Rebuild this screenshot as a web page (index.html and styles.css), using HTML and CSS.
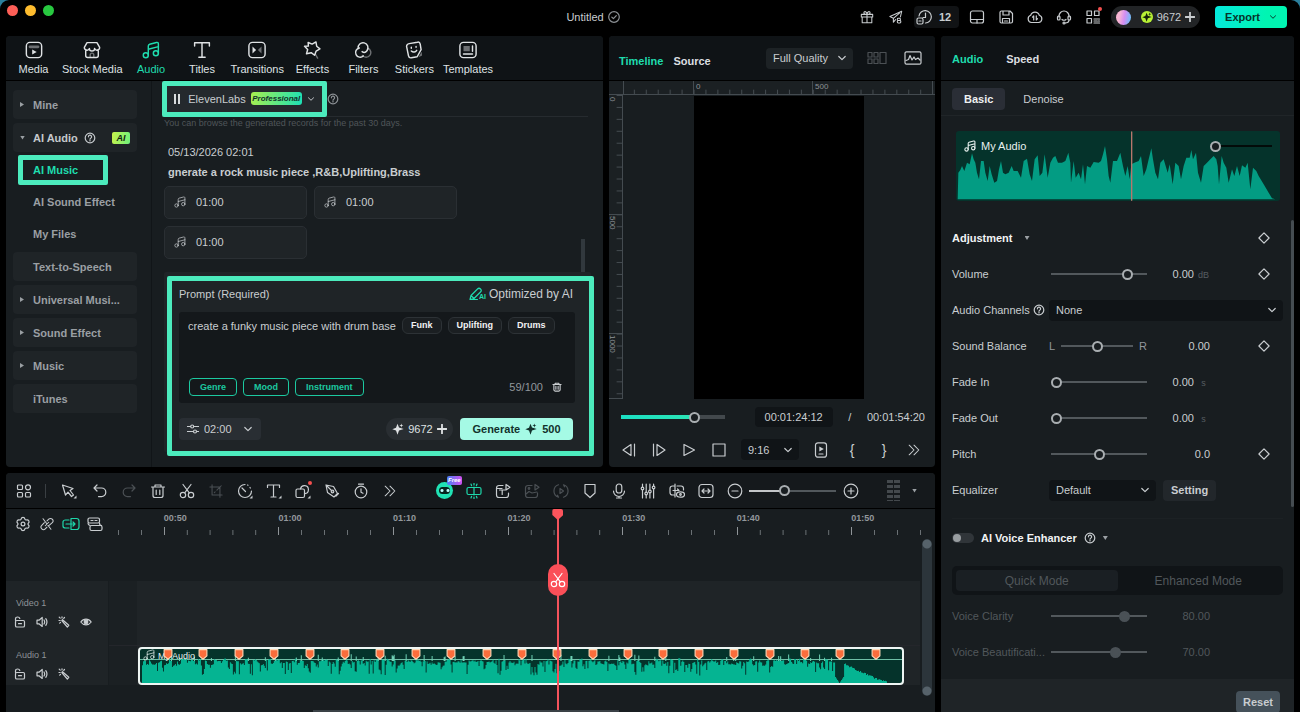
FILE: index.html
```html
<!DOCTYPE html>
<html lang="en">
<head>
    <meta charset="UTF-8">
    <meta name="viewport" content="width=device-width, initial-scale=1.0">
    <title>Untitled</title>
    <link rel="stylesheet" href="styles.css">
</head>
<body>

<!-- icon sprite -->
<svg class="sprite" aria-hidden="true">
    <symbol id="chevron" viewBox="0 0 10 10"><path d="M1.8 3.5L5 6.600l3.200-3.100"/></symbol>
    <symbol id="help" viewBox="0 0 12 12"><circle cx="6" cy="6" r="4.800"/><path d="M4.400 4.800a1.600 1.600 0 1 1 2.300 1.400c-.5.3-.7.5-.7 1M6 8.300v.7"/></symbol>
    <symbol id="diamond" viewBox="0 0 12 12"><path d="M6 .9L11.100 6 6 11.100.9 6z"/></symbol>
    <symbol id="plus" viewBox="0 0 10 10"><path d="M5 .5v9M.5 5h9"/></symbol>
    <symbol id="spark" viewBox="0 0 12 12"><path fill="currentColor" stroke="none" d="M5.500.8L7 4.600 11.700 6 7 7.400 5.500 11.700 4 7.600.3 6.200 4 4.800zM9.300.5l.5 1.600 1.600.5-1.600.5-.5 1.600-.5-1.600-1.500-.5 1.500-.5z"/></symbol>
    <symbol id="music" viewBox="0 0 20 20"><circle cx="4.200" cy="15.800" r="2.800"/><circle cx="15.400" cy="13.600" r="2.800"/><path d="M7 15.800V5.600c0-1 .6-1.700 1.500-2l7.600-2c1.200-.3 2.100.4 2.100 1.600v10.400M7 9.200l11.200-2.900"/></symbol>
    <symbol id="media" viewBox="0 0 20 20"><rect x="1.500" y="1.500" width="17" height="17" rx="4"/><path class="dim" d="M5.500 6.500h9" stroke-width="3"/><path fill="currentColor" stroke="none" d="M8 9.500l5 2.800-5 2.800z"/></symbol>
    <symbol id="store" viewBox="0 0 20 20"><path d="M4.500 1.800h11l3 5.300a2.900 2.900 0 0 1-5.600 1.200 2.900 2.900 0 0 1-5.800 0A2.900 2.900 0 0 1 1.500 7.100zM3 10.500v5.700c0 1.300.9 2.200 2.200 2.200h9.600c1.300 0 2.200-.9 2.200-2.200v-5.700"/><path class="dim" d="M8 18v-2.500a2 2 0 0 1 4 0V18"/></symbol>
    <symbol id="titles" viewBox="0 0 20 20"><path d="M1.800 5.500V2h16.400v3.500M10 2v16M6.500 18h7"/></symbol>
    <symbol id="transitions" viewBox="0 0 20 20"><rect x="1" y="1.500" width="18" height="17" rx="4"/><path fill="currentColor" stroke="none" d="M5 6.200l4 3.800-4 3.800z"/><path class="dim" fill="currentColor" stroke="none" d="M15 6.200L11 10l4 3.800z"/></symbol>
    <symbol id="effects" viewBox="0 0 20 20"><path d="M5.700 1.700l4.500 1.800L14.400 1l.8 4.800 3.600 2.900-4.200 2.500-1.700 4.600-3.800-2.800-5.200 1.200 1.300-4.800L1.700 5.900l4.300-.2z"/><path class="dim" d="M14 15l2.200 4"/></symbol>
    <symbol id="filters" viewBox="0 0 20 20"><path d="M4.600 8.300a5.500 5.500 0 1 1 9.800 2.500c-1.300 1.700-3.700 2.200-5.400 1"/><path d="M6 7.700a5.200 5.200 0 1 0 4.400 9"/><path class="dim" d="M15.300 8a5.200 5.200 0 1 1-6 8"/></symbol>
    <symbol id="stickers" viewBox="0 0 20 20"><path d="M4.600 2.900l9.200-1.600c1.500-.3 2.800.6 3.100 2.100l1 6.100-4.400 8-6.500 1.200c-1.500.2-2.800-.7-3.100-2.200L1.800 6.200c-.3-1.600 1-3 2.800-3.300z"/><path d="M7 7v1M12.300 6v1M7 11.200c2 1.800 4.600 1.300 6-.9"/><path class="dim" fill="currentColor" stroke="none" d="M18.500 12l-3.500 6 4-2z"/></symbol>
    <symbol id="templates" viewBox="0 0 20 20"><rect x="1" y="1.500" width="18" height="17" rx="4"/><path class="dim" fill="currentColor" stroke="none" d="M5 5.500h7v6H5z"/><path d="M15 5.500v6M5 14.500h10"/></symbol>
    <symbol id="check" viewBox="0 0 12 12"><circle cx="6" cy="6" r="5.300"/><path d="M3.800 6.100l1.600 1.600 2.900-3.100"/></symbol>
    <symbol id="gift" viewBox="0 0 16 16"><path d="M1.500 5h13v3h-13zM2.500 8v6.500h11V8M8 5v9.500M8 5C5 5 4 3.800 4.600 2.500S7.600 1.800 8 5c.4-3.200 2.800-3.800 3.400-2.500S11 5 8 5"/></symbol>
    <symbol id="send" viewBox="0 0 16 16"><path d="M1 7.500L14.500 1.500 13 8M1 7.500l4 2 7-6M5 9.500v4.500l2.500-3"/><rect x="9.500" y="9.500" width="3.500" height="2.500" rx="1"/><rect x="9.500" y="12" width="4" height="2.800" rx="1"/></symbol>
    <symbol id="credits" viewBox="0 0 16 16"><path d="M3 7a6.200 6.200 0 1 1 6.500 7M9.500 4v4.500H7"/><rect x="1" y="9" width="6" height="6" rx="1.500"/><path d="M3 12h2"/></symbol>
    <symbol id="layout" viewBox="0 0 16 16"><rect x="1.500" y="2" width="13" height="12" rx="2"/><path d="M1.500 10.500h13M8 10.500V14"/></symbol>
    <symbol id="save" viewBox="0 0 16 16"><path d="M2 3.500C2 2.500 2.500 2 3.500 2H12l2.500 2.500v8c0 1-.5 1.500-1.500 1.500H3.500C2.500 14 2 13.500 2 12.500zM5 2v4h6V2M4.500 14V9.500h7V14M6.500 12h3"/></symbol>
    <symbol id="cloud" viewBox="0 0 16 16"><path d="M4.500 13.500a3.700 3.700 0 0 1-.8-7.200 4.500 4.500 0 0 1 8.600 0 3.700 3.700 0 0 1-.8 7.200zM6.700 11V6.800L5.500 8.200M9.300 6.800V11l1.200-1.400"/></symbol>
    <symbol id="headset" viewBox="0 0 16 16"><path d="M3 8V7a5 5 0 0 1 10 0v1"/><rect x="1.500" y="7" width="2.500" height="4" rx="1"/><rect x="12" y="7" width="2.500" height="4" rx="1"/><path d="M13 11c0 2-1.500 3-4 3M6 10.500c1 1 3 1 4 0"/><circle cx="8" cy="14" r="1"/></symbol>
    <symbol id="apps" viewBox="0 0 16 16"><rect x="2" y="2" width="4.500" height="4.500"/><rect x="9.500" y="2" width="4.500" height="4.500"/><rect x="2" y="9.500" width="4.500" height="4.500"/><path d="M9 10h5.500M9 12h3M13 12h1.500M9 14h5.500"/></symbol>
    <symbol id="pen" viewBox="0 0 14 14"><path d="M1 12.500l1-4L8.500 2c1-1 2-1 3 0s1 2 0 3L5 11.500zM2 8.500l3 3M1 12.500h7.500"/></symbol>
    <symbol id="trash" viewBox="0 0 16 16"><path d="M1.500 4h13M5 4V2h6v2M3 4v8.500c0 1 .8 2 2 2h6c1.200 0 2-1 2-2V4M6.200 7v4.500M9.800 7v4.500"/></symbol>
    <symbol id="sliders" viewBox="0 0 12 12"><path d="M.5 3.500h3M7 3.500h4.500M.5 8.500H6M10 8.500h1.500"/><circle cx="5.200" cy="3.500" r="1.500"/><circle cx="8" cy="8.500" r="1.500"/></symbol>
    <symbol id="compare" viewBox="0 0 20 14"><rect x="1" y="1.500" width="4" height="4.500"/><rect x="1" y="8" width="4" height="4.500"/><rect x="7" y="1.500" width="4" height="4.500"/><rect x="7" y="8" width="4" height="4.500"/><rect x="13" y="1.500" width="6" height="11"/></symbol>
    <symbol id="scope" viewBox="0 0 18 14"><rect x="1" y=".8" width="16" height="12.400" rx="1.500"/><path d="M2 9.500l2.500-1L6 4.500l2 4.500 2-3 1.500 2.500L14 7l2 2"/></symbol>
    <symbol id="prev-frame" viewBox="0 0 16 16"><path d="M10 2.500v11L2 8zM13.500 2v12"/></symbol>
    <symbol id="next-frame" viewBox="0 0 16 16"><path d="M6 2.500v11L14 8zM2.500 2v12"/></symbol>
    <symbol id="play" viewBox="0 0 16 16"><path d="M3 2.500v11L13.500 8z"/></symbol>
    <symbol id="stop" viewBox="0 0 16 16"><path d="M2 2h12v12H2z"/></symbol>
    <symbol id="device" viewBox="0 0 16 16"><rect x="2.500" y=".8" width="11" height="14.400" rx="2.500"/><path fill="currentColor" stroke="none" d="M6.300 4.500l4.500 2.500-4.500 2.500z"/><path d="M6 12h4"/></symbol>
    <symbol id="more" viewBox="0 0 16 16"><path d="M2.500 2.500L8 8l-5.500 5.500M8 2.500L13.500 8 8 13.500"/></symbol>
    <symbol id="grid" viewBox="0 0 16 16"><rect x="1.500" y="2" width="5" height="4.500" rx="1"/><circle cx="12" cy="4.300" r="2.500"/><rect x="1.500" y="9.500" width="5" height="4.500" rx="1"/><rect x="9.500" y="9.500" width="5" height="4.500" rx="1"/></symbol>
    <symbol id="cursor" viewBox="0 0 16 16"><path d="M1.500 2l10.500 3.500-3 2 3.500 4.500-2 1.500L7 9.200 4.500 12z"/><path fill="currentColor" stroke="none" d="M15.500 12.500v3h-3z"/></symbol>
    <symbol id="undo" viewBox="0 0 16 16"><path d="M5 2L2 5l3 3M2 5h7.500a4.300 4.300 0 0 1 0 8.600H6.500"/></symbol>
    <symbol id="redo" viewBox="0 0 16 16"><path d="M11 2l3 3-3 3M14 5H6.500a4.300 4.300 0 0 0 0 8.600h3"/></symbol>
    <symbol id="cut" viewBox="0 0 16 16"><circle cx="4" cy="12" r="2.700"/><circle cx="12" cy="12" r="2.700"/><path d="M4 1.500l6.300 8.300M12 1.500L5.700 9.800"/></symbol>
    <symbol id="crop" viewBox="0 0 16 16"><path d="M3.500 1v11.500H15M1 3.500h11.500V15M9 7l5-5M6 10l1-1"/></symbol>
    <symbol id="speed" viewBox="0 0 16 16"><path d="M8 1.500A6.500 6.500 0 1 0 14.500 8M5 5l3.500 3.500M10.500 2l.5.2M13 4.500l.3.500"/><path fill="currentColor" stroke="none" d="M15.500 12.500v3h-3z"/></symbol>
    <symbol id="text" viewBox="0 0 16 16"><path d="M1.500 4.500V2h12v2.500M7.500 2v12M5 14h5"/><path fill="currentColor" stroke="none" d="M15.500 12.500v3h-3z"/></symbol>
    <symbol id="shapes" viewBox="0 0 16 16"><rect x="1" y="6" width="8.500" height="8.500" rx="1.500"/><path d="M5.500 5.800a4 4 0 1 1 4.300 4.800"/><path fill="currentColor" stroke="none" d="M15.500 12.500v3h-3z"/></symbol>
    <symbol id="nib" viewBox="0 0 16 16"><path d="M2 2l7.500 1.500 4 7-3.500 3.500-6.500-4.500zM2 2l6 6M12 13l2.500-2.500"/><circle cx="8.500" cy="8.500" r="1.300"/></symbol>
    <symbol id="timer" viewBox="0 0 16 16"><circle cx="8" cy="9" r="5.800"/><path d="M5.500 1.200h5M8 5.800V9.300l2 1"/></symbol>
    <symbol id="split" viewBox="0 0 16 16"><rect x="1" y="4.500" width="14" height="7" rx="1.500"/><path d="M8 4v8M8 0v2M5 1l.6 1.700M11 1l-.6 1.700M8 14v2M5 15l.6-1.700M11 15l-.6-1.700"/></symbol>
    <symbol id="text-clip" viewBox="0 0 16 16"><path d="M8 2.500H4c-1.500 0-2.500 1-2.500 2.500v7c0 1.500 1 2.500 2.500 2.500h7c1.500 0 2.500-1 2.500-2.500V10M4.500 7h5.500M7.200 7v4.500M11 1.500v5.500l4-2.700zM1.500 5.500H7"/></symbol>
    <symbol id="image-clip" viewBox="0 0 16 16"><path d="M8 2.500H4c-1.500 0-2.500 1-2.500 2.500v7c0 1.500 1 2.500 2.500 2.500h7c1.500 0 2.500-1 2.500-2.500V10M11 1.500v5.500l4-2.700zM2 11l3-2.500 3 1.500 5-1"/><circle cx="5" cy="5.500" r=".8"/></symbol>
    <symbol id="rotate" viewBox="0 0 16 16"><path d="M5.500 1.800a6.500 6.500 0 0 0 0 12.400M10.500 1.800a6.500 6.500 0 0 1 0 12.400M7 5.500v5L10.500 8zM5.500 14.200l-1-2M10.500 1.800l1 2"/></symbol>
    <symbol id="shield" viewBox="0 0 16 16"><path d="M3 1.500h10v8.500l-5 4.500-5-4.500z"/></symbol>
    <symbol id="mic" viewBox="0 0 16 16"><rect x="5.200" y="1" width="5.600" height="9" rx="2.800"/><path d="M2.500 8a5.500 5.500 0 0 0 11 0M8 13.500v1.500M5.500 15h5"/></symbol>
    <symbol id="mixer" viewBox="0 0 16 16"><path d="M2.500 1v3M2.500 7v8M6.200 1v8M6.200 12v3M9.900 1v6M9.900 10v5M13.600 1v2M13.600 6v9"/><circle cx="2.500" cy="5.500" r="1.300"/><circle cx="6.200" cy="10.500" r="1.300"/><circle cx="9.900" cy="8.500" r="1.300"/><circle cx="13.600" cy="4.500" r="1.300"/></symbol>
    <symbol id="track-eye" viewBox="0 0 16 16"><path d="M5 3H3.500C2 3 1 4 1 5.500v4C1 11 2 12 3.500 12H5M6 1v13M8 3h4c1.500 0 2.500 1 2.500 2.500V7M4 7.500h6L8.500 6"/><ellipse cx="11.500" cy="11.500" rx="4" ry="2.700"/><circle cx="11.500" cy="11.500" r=".8"/></symbol>
    <symbol id="fit" viewBox="0 0 16 16"><rect x="1" y="1.500" width="14" height="13" rx="3"/><path d="M4 8h8M6 6L4 8l2 2M10 6l2 2-2 2"/></symbol>
    <symbol id="zoom-out" viewBox="0 0 16 16"><circle cx="8" cy="8" r="6.800"/><path d="M5 8h6"/></symbol>
    <symbol id="zoom-in" viewBox="0 0 16 16"><circle cx="8" cy="8" r="6.800"/><path d="M5 8h6M8 5v6"/></symbol>
    <symbol id="gear" viewBox="0 0 16 16"><path d="M6.200 2.800C6.500 1 9.500 1 9.800 2.800c.2 1 1 1.400 1.900 1.100 1.700-.6 3.200 1.900 1.800 3.100-.7.600-.7 1.400 0 2 1.400 1.200-.1 3.700-1.800 3.100-.9-.3-1.700.1-1.900 1.100-.3 1.800-3.300 1.800-3.600 0-.2-1-1-1.400-1.900-1.100C2.600 12.700 1.100 10.200 2.500 9c.7-.6.7-1.400 0-2C1.100 5.800 2.600 3.300 4.300 3.900c.9.300 1.700-.1 1.900-1.100z"/><circle cx="8" cy="8" r="1.900"/></symbol>
    <symbol id="unlink" viewBox="0 0 16 16"><path d="M8 4.500l2-2a2.800 2.800 0 0 1 4 4L10.500 9.500M8 11.500l-2 2a2.800 2.800 0 0 1-4-4l3-3M6 10l4-4M3.500 2l9 12"/></symbol>
    <symbol id="snap" viewBox="0 0 18 14"><path d="M7 3H3.500C2 3 1 4 1 5v4c0 1 1 2 2.500 2H7M9 1.500h5.500c1.500 0 2.500 1 2.500 2.500v6c0 1.500-1 2.500-2.500 2.500H9zM4 7h9M11 5l2 2-2 2"/></symbol>
    <symbol id="ripple" viewBox="0 0 16 16"><rect x="1" y="2" width="11.500" height="5" rx="1.500"/><rect x="3" y="9.500" width="12" height="5" rx="1.500"/><path d="M4 4.500h2M8 4.500h2M1 7c0 1 .5 2 2 2.500M12.500 7c0 1.500.5 2.500 2 2.500"/></symbol>
    <symbol id="lock" viewBox="0 0 12 12"><rect x="1.500" y="4.500" width="9" height="6.500" rx="1.300"/><path d="M1.500 4.500V3c0-1.200 1-2 2.200-2 1 0 1.800.5 2.100 1.500M4.500 7.700h3"/></symbol>
    <symbol id="speaker" viewBox="0 0 12 12"><path d="M1 4.200h2L6.200 1.500v9L3 7.800H1zM8 4c.8 1.200.8 2.800 0 4M9.800 2.700c1.400 2 1.400 4.600 0 6.600"/></symbol>
    <symbol id="wand" viewBox="0 0 12 12"><path d="M4.500 3.700l6.300 5.600-1.500 1.700-5.500-6.300zM1 4.500h1.200M4 .8V2M1.200 1.200l1 1M6.500 1.500l-.8.900M1.700 7.200l.8-.8"/></symbol>
    <symbol id="eye" viewBox="0 0 12 12"><path d="M.8 6C3.500 2.200 8.500 2.200 11.200 6 8.500 9.800 3.500 9.800.8 6z"/><circle cx="6" cy="6" r="1.800" fill="currentColor"/></symbol>
    <symbol id="marker" viewBox="0 0 11 12"><path fill="#fb6d3c" stroke="#ffd9b8" stroke-width="1.200" d="M1.200.6h8.600v7L5.500 11.200 1.200 7.600z"/></symbol>
</svg>

<div class="app">
    <header class="titlebar">
        <div class="lights"><span class="light red"></span><span class="light yellow"></span><span class="light green"></span></div>
        <div class="doc-title">Untitled <svg class="i12 muted"><use href="#check"/></svg></div>
        <div class="title-actions">
            <button class="icon-btn" aria-label="Gifts"><svg class="i14"><use href="#gift"/></svg></button>
            <button class="icon-btn" aria-label="Share"><svg class="i14"><use href="#send"/></svg></button>
            <button class="credit-btn"><svg class="i16"><use href="#credits"/></svg>12</button>
            <button class="icon-btn" aria-label="Layout"><svg class="i16"><use href="#layout"/></svg></button>
            <button class="icon-btn" aria-label="Save"><svg class="i16"><use href="#save"/></svg></button>
            <button class="icon-btn" aria-label="Cloud"><svg class="i16"><use href="#cloud"/></svg></button>
            <button class="icon-btn" aria-label="Support"><svg class="i16"><use href="#headset"/></svg></button>
            <button class="icon-btn has-dot" aria-label="Apps"><svg class="i16"><use href="#apps"/></svg></button>
            <button class="account"><span class="avatar"></span><span class="coin"><svg class="i10"><use href="#spark"/></svg></span>9672 <svg class="i10 bold"><use href="#plus"/></svg></button>
            <button class="export">Export <svg class="i8"><use href="#chevron"/></svg></button>
        </div>
    </header>

    <section class="panel library">
        <nav class="tabs">
            <button class="tab"><svg class="i18"><use href="#media"/></svg>Media</button>
            <button class="tab"><svg class="i18"><use href="#store"/></svg>Stock Media</button>
            <button class="tab active"><svg class="i18"><use href="#music"/></svg>Audio</button>
            <button class="tab"><svg class="i18"><use href="#titles"/></svg>Titles</button>
            <button class="tab"><svg class="i18"><use href="#transitions"/></svg>Transitions</button>
            <button class="tab"><svg class="i18"><use href="#effects"/></svg>Effects</button>
            <button class="tab"><svg class="i18"><use href="#filters"/></svg>Filters</button>
            <button class="tab"><svg class="i18"><use href="#stickers"/></svg>Stickers</button>
            <button class="tab"><svg class="i18"><use href="#templates"/></svg>Templates</button>
        </nav>
        <div class="library-body">
            <nav class="sidebar">
                <a href="#" class="side-item"><span class="caret right"></span>Mine</a>
                <a href="#" class="side-item open"><span class="caret"></span>AI Audio <svg class="i12"><use href="#help"/></svg><span class="ai-badge">AI</span></a>
                <a href="#" class="side-sub highlight active">AI Music</a>
                <a href="#" class="side-sub">AI Sound Effect</a>
                <a href="#" class="side-sub">My Files</a>
                <a href="#" class="side-item plain">Text-to-Speech</a>
                <a href="#" class="side-item"><span class="caret right"></span>Universal Musi...</a>
                <a href="#" class="side-item"><span class="caret right"></span>Sound Effect</a>
                <a href="#" class="side-item"><span class="caret right"></span>Music</a>
                <a href="#" class="side-item plain">iTunes</a>
            </nav>
            <div class="generator">
                <div class="model-row">
                    <button class="model highlight"><span class="pause"></span>ElevenLabs<span class="pro-badge">Professional</span><svg class="i8"><use href="#chevron"/></svg></button>
                    <svg class="i12 muted"><use href="#help"/></svg>
                </div>
                <div class="history">
                    <p class="notice">You can browse the generated records for the past 30 days.</p>
                    <p class="date">05/13/2026 02:01</p>
                    <p class="query">gnerate a rock music piece ,R&amp;B,Uplifting,Brass</p>
                    <div class="results">
                        <button class="result"><svg class="i12"><use href="#music"/></svg>01:00</button>
                        <button class="result"><svg class="i12"><use href="#music"/></svg>01:00</button>
                        <button class="result"><svg class="i12"><use href="#music"/></svg>01:00</button>
                    </div>
                    <span class="history-scroll"></span>
                </div>
                <form class="prompt highlight">
                    <div class="prompt-head">
                        <label for="prompt">Prompt (Required)</label>
                        <button type="button" class="optimize"><svg class="i14"><use href="#pen"/></svg><span class="pen-ai">AI</span>Optimized by AI</button>
                    </div>
                    <div class="prompt-box">
                        <div class="prompt-line">
                            <input type="text" id="prompt" value="create a funky music piece with drum base">
                            <span class="tag">Funk</span><span class="tag">Uplifting</span><span class="tag">Drums</span>
                        </div>
                        <div class="prompt-tools">
                            <button type="button" class="chip">Genre</button>
                            <button type="button" class="chip">Mood</button>
                            <button type="button" class="chip">Instrument</button>
                            <span class="count">59/100</span>
                            <button type="button" class="clear" aria-label="Clear"><svg class="i10 bold"><use href="#trash"/></svg></button>
                        </div>
                    </div>
                    <div class="prompt-foot">
                        <label class="select length"><svg class="i12 lead"><use href="#sliders"/></svg><select aria-label="Length"><option>02:00</option></select><svg class="i10 arrow"><use href="#chevron"/></svg></label>
                        <button type="button" class="balance"><svg class="i12"><use href="#spark"/></svg>9672<svg class="i10 bold"><use href="#plus"/></svg></button>
                        <button type="button" class="generate">Generate <svg class="i12"><use href="#spark"/></svg> 500</button>
                    </div>
                </form>
            </div>
        </div>
    </section>

    <section class="panel preview">
        <div class="preview-head">
            <button class="ptab active">Timeline</button>
            <button class="ptab">Source</button>
            <label class="select quality"><select aria-label="Quality"><option>Full Quality</option></select><svg class="i10 arrow"><use href="#chevron"/></svg></label>
            <button class="icon-plain faded" aria-label="Compare"><svg class="wide-icon"><use href="#compare"/></svg></button>
            <button class="icon-plain" aria-label="Scopes"><svg class="wide-icon"><use href="#scope"/></svg></button>
        </div>
        <svg class="ruler-x">
            <defs>
                <pattern id="tx" x="84.500" width="11.930" height="14" patternUnits="userSpaceOnUse"><path d="M.5 9v5"/></pattern>
            </defs>
            <rect x="20" width="306" height="14" fill="url(#tx)" stroke="none"/>
            <path d="M14.500 0v14M84.500 0v14M203.500 0v14M323.500 0v14M0 13.500h600"/>
            <text x="87" y="8">0</text><text x="206" y="8">500</text>
        </svg>
        <div class="stage">
            <svg class="ruler-y">
                <defs>
                    <pattern id="ty" y="0" width="14" height="11.930" patternUnits="userSpaceOnUse"><path d="M8 .5h6"/></pattern>
                </defs>
                <rect width="14" height="100%" fill="url(#ty)" stroke="none"/>
                <path d="M13.500 0v303M0 119.500h14M0 238.500h14M0 303.500h14"/>
                <text transform="translate(1 2) rotate(90)">0</text>
                <text transform="translate(1 121) rotate(90)">500</text>
                <text transform="translate(1 240) rotate(90)">1000</text>
            </svg>
            <div class="stage-area"><div class="canvas"></div></div>
        </div>
        <div class="transport">
            <div class="time-row">
                <input type="range" class="seek" aria-label="Seek" value="73">
                <span class="time-now">00:01:24:12</span>
                <span class="slash">/</span>
                <span class="time-total">00:01:54:20</span>
            </div>
            <div class="play-row">
                <button class="icon-plain" aria-label="Previous frame"><svg class="i16"><use href="#prev-frame"/></svg></button>
                <button class="icon-plain" aria-label="Next frame"><svg class="i16"><use href="#next-frame"/></svg></button>
                <button class="icon-plain" aria-label="Play"><svg class="i16"><use href="#play"/></svg></button>
                <button class="icon-plain" aria-label="Stop"><svg class="i16"><use href="#stop"/></svg></button>
                <label class="select ratio"><select aria-label="Aspect ratio"><option>9:16</option></select><svg class="i10 arrow"><use href="#chevron"/></svg></label>
                <button class="icon-plain" aria-label="Device preview"><svg class="i16"><use href="#device"/></svg></button>
                <button class="icon-plain brace" aria-label="Mark in">{</button>
                <button class="icon-plain brace" aria-label="Mark out">}</button>
                <button class="icon-plain" aria-label="More"><svg class="i14"><use href="#more"/></svg></button>
            </div>
        </div>
    </section>

    <aside class="panel inspector">
        <div class="inspector-head">
            <button class="ptab active">Audio</button>
            <button class="ptab">Speed</button>
        </div>
        <div class="subtabs">
            <button class="subtab active">Basic</button>
            <button class="subtab">Denoise</button>
        </div>
        <div class="inspector-body">
            <div class="clip-card">
                <svg class="card-wave" viewBox="77 395 972 210" preserveAspectRatio="none">
                    <path d="M82 600L84 520 90 512 95 500 102 515 110 490 118 495 125 462 130 480 135 490 140 520 146 540 152 485 160 485 165 520 172 545 178 500 184 525 192 550 200 545 206 510 212 485 218 520 225 525 235 520 244 500 250 515 262 515 272 535 280 485 290 478 298 525 305 545 313 480 322 468 328 530 336 520 343 465 352 535 360 490 368 475 375 470 383 490 395 490 405 485 414 460 420 490 422 550 430 485 436 535 445 520 452 540 458 495 464 555 470 500 480 505 490 488 505 490 512 485 518 465 524 440 530 480 535 530 540 550 548 485 560 485 570 460 578 500 585 530 592 500 598 540 603 495 612 490 625 485 632 470 640 530 648 510 655 480 663 447 668 480 675 520 683 540 690 490 700 480 706 500 712 520 718 495 727 555 735 490 745 500 752 540 760 500 768 475 778 475 783 452 788 480 797 460 803 520 812 550 820 500 830 490 840 480 850 470 858 480 862 500 866 555 874 470 880 490 888 505 895 550 905 510 912 530 920 500 928 530 935 498 945 505 952 490 960 570 968 505 978 515 985 530 1000 555 1015 580 1025 597 1035 600z"/>
                    <path class="card-head" d="M604 398v205"/>
                </svg>
                <div class="card-top">
                    <svg class="i12 bold"><use href="#music"/></svg><span>My Audio</span>
                    <input type="range" class="fade-handle" aria-label="Clip volume" value="0">
                </div>
            </div>

            <div class="prop prop-title"><h2>Adjustment <span class="caret"></span></h2><button class="key" aria-label="Keyframe"><svg class="i12"><use href="#diamond"/></svg></button></div>
            <div class="prop"><label for="volume">Volume</label><input type="range" id="volume" value="83"><span class="value">0.00 <small>dB</small></span><button class="key" aria-label="Keyframe volume"><svg class="i12"><use href="#diamond"/></svg></button></div>
            <div class="prop"><label for="channels">Audio Channels <svg class="i12"><use href="#help"/></svg></label><div class="select dark wide"><select id="channels"><option>None</option></select><svg class="i10 arrow"><use href="#chevron"/></svg></div></div>
            <div class="prop"><label for="balance">Sound Balance</label><div class="lr"><span>L</span><input type="range" id="balance" value="50"><span>R</span></div><span class="value">0.00</span><button class="key" aria-label="Keyframe balance"><svg class="i12"><use href="#diamond"/></svg></button></div>
            <div class="prop"><label for="fadein">Fade In</label><input type="range" id="fadein" value="0"><span class="value">0.00 <small>s</small></span></div>
            <div class="prop"><label for="fadeout">Fade Out</label><input type="range" id="fadeout" value="0"><span class="value">0.00 <small>s</small></span></div>
            <div class="prop"><label for="pitch">Pitch</label><input type="range" id="pitch" value="50"><span class="value">0.0</span><button class="key" aria-label="Keyframe pitch"><svg class="i12"><use href="#diamond"/></svg></button></div>
            <div class="prop"><label for="equalizer">Equalizer</label><div class="eq"><div class="select dark"><select id="equalizer"><option>Default</option></select><svg class="i10 arrow"><use href="#chevron"/></svg></div><button class="setting">Setting</button></div></div>

            <div class="enhancer">
                <label class="toggle-row"><input type="checkbox" class="toggle"><b>AI Voice Enhancer</b><svg class="i12"><use href="#help"/></svg><span class="caret"></span></label>
                <div class="modes"><button class="mode active" disabled>Quick Mode</button><button class="mode" disabled>Enhanced Mode</button></div>
                <div class="prop off"><label for="clarity">Voice Clarity</label><input type="range" id="clarity" value="80" disabled><span class="value">80.00</span></div>
                <div class="prop off"><label for="beauty">Voice Beautificati...</label><input type="range" id="beauty" value="70" disabled><span class="value">70.00</span></div>
            </div>
            <span class="inspector-scroll"></span>
        </div>
        <div class="inspector-foot"><button class="reset">Reset</button></div>
    </aside>

    <section class="panel timeline">
        <div class="toolbar">
            <button class="tool" aria-label="Modules"><svg class="i16"><use href="#grid"/></svg></button>
            <span class="sep"></span>
            <button class="tool select-tool" aria-label="Select"><svg class="i16"><use href="#cursor"/></svg></button>
            <button class="tool" aria-label="Undo"><svg class="i16"><use href="#undo"/></svg></button>
            <button class="tool faded" aria-label="Redo"><svg class="i16"><use href="#redo"/></svg></button>
            <button class="tool" aria-label="Delete"><svg class="i16"><use href="#trash"/></svg></button>
            <button class="tool" aria-label="Cut"><svg class="i16"><use href="#cut"/></svg></button>
            <button class="tool faded" aria-label="Crop"><svg class="i14"><use href="#crop"/></svg></button>
            <button class="tool" aria-label="Speed"><svg class="i16"><use href="#speed"/></svg></button>
            <button class="tool" aria-label="Text"><svg class="i16"><use href="#text"/></svg></button>
            <button class="tool has-dot" aria-label="Shapes"><svg class="i16"><use href="#shapes"/></svg></button>
            <button class="tool" aria-label="Pen"><svg class="i16"><use href="#nib"/></svg></button>
            <button class="tool" aria-label="Duration"><svg class="i16"><use href="#timer"/></svg></button>
            <button class="tool" aria-label="More tools"><svg class="i14"><use href="#more"/></svg></button>
            <button class="tool robot" aria-label="AI assistant"><span class="face"></span><span class="free">Free</span></button>
            <button class="tool accent" aria-label="Auto split"><svg class="i16"><use href="#split"/></svg></button>
            <button class="tool" aria-label="Text clip"><svg class="i16"><use href="#text-clip"/></svg></button>
            <button class="tool faded" aria-label="Image clip"><svg class="i16"><use href="#image-clip"/></svg></button>
            <button class="tool faded" aria-label="Rotate"><svg class="i16"><use href="#rotate"/></svg></button>
            <button class="tool" aria-label="Marker"><svg class="i16"><use href="#shield"/></svg></button>
            <button class="tool" aria-label="Voiceover"><svg class="i16"><use href="#mic"/></svg></button>
            <button class="tool" aria-label="Mixer"><svg class="i16"><use href="#mixer"/></svg></button>
            <button class="tool" aria-label="Track view"><svg class="i16"><use href="#track-eye"/></svg></button>
            <button class="tool" aria-label="Fit"><svg class="i16"><use href="#fit"/></svg></button>
            <button class="tool" aria-label="Zoom out"><svg class="i16"><use href="#zoom-out"/></svg></button>
            <input type="range" class="zoom" aria-label="Zoom" value="40">
            <button class="tool" aria-label="Zoom in"><svg class="i16"><use href="#zoom-in"/></svg></button>
            <span class="meter"></span>
            <span class="caret"></span>
        </div>

        <div class="timeline-body">
            <div class="ruler-row">
                <div class="track-tools">
                    <button class="icon-plain" aria-label="Track settings"><svg class="i16"><use href="#gear"/></svg></button>
                    <button class="icon-plain" aria-label="Unlink"><svg class="i14"><use href="#unlink"/></svg></button>
                    <button class="icon-plain accent" aria-label="Snap"><svg class="snap"><use href="#snap"/></svg></button>
                    <button class="icon-plain" aria-label="Ripple"><svg class="i16"><use href="#ripple"/></svg></button>
                </div>
                <div class="ruler">
                    <span class="mark lead"></span>
                    <span class="mark">00:50</span><span class="mark">01:00</span><span class="mark">01:10</span><span class="mark">01:20</span><span class="mark">01:30</span><span class="mark">01:40</span>
                    <span class="mark last">01:50</span>
                </div>
            </div>
            <div class="tracks">
                <div class="track video">
                    <div class="track-head">Video 1
                        <div class="track-icons"><svg class="i12"><use href="#lock"/></svg><svg class="i12"><use href="#speaker"/></svg><svg class="i12"><use href="#wand"/></svg><svg class="i12"><use href="#eye"/></svg></div>
                    </div>
                    <div class="lane"></div>
                </div>
                <div class="track audio">
                    <div class="track-head">Audio 1
                        <div class="track-icons"><svg class="i12"><use href="#lock"/></svg><svg class="i12"><use href="#speaker"/></svg><svg class="i12"><use href="#wand"/></svg></div>
                    </div>
                    <div class="lane">
                        <div class="clip">
                            <svg class="wave" viewBox="0 0 763 34" preserveAspectRatio="none"><path id="wave"/><path class="wave-peaks" id="peaks"/></svg>
                            <div class="clip-name"><svg class="i12"><use href="#music"/></svg>My Audio</div>
                            <div class="markers" id="markers"></div>
                        </div>
                    </div>
                </div>
            </div>
            <div class="v-scroll"></div>
            <div class="playhead"><span class="playhead-grip"></span><button class="cut-here" aria-label="Split at playhead"><svg class="i16"><use href="#cut"/></svg></button></div>
            <div class="h-scroll"></div>
        </div>
    </section>
</div>

<script src="script.js"></script>
</body>
</html>
```
FILE: styles.css
```css
* {
    box-sizing: border-box;
}
html {
    background: #2b7f9c;
}
body {
    margin: 0;
    font-family: "Liberation Sans", Arial, sans-serif;
    font-size: 11px;
    line-height: 14px;
    color: #c9cdd0;
}
button, input, select {
    font: inherit;
    color: inherit;
    margin: 0;
    padding: 0;
    border: none;
    background: none;
}
button {
    display: flex;
    align-items: center;
    justify-content: center;
    flex: none;
    cursor: pointer;
}
a {
    color: inherit;
    text-decoration: none;
}
p, h2 {
    margin: 0;
    font-size: 11px;
}
svg {
    display: block;
    flex: none;
    fill: none;
    stroke: currentColor;
    stroke-width: 1.2;
    stroke-linecap: round;
    stroke-linejoin: round;
}
.sprite {
    position: absolute;
    width: 0;
    height: 0;
}
.dim { opacity: 0.45; }
.bold { stroke-width: 1.8; }
.muted { color: #8c9195; }
.faded { color: #4b5054; }
.accent { color: #1ed8ab; }
.i8 { width: 8px; height: 8px; }
.i10 { width: 10px; height: 10px; }
.i12 { width: 12px; height: 12px; }
.i14 { width: 14px; height: 14px; }
.i16 { width: 16px; height: 16px; }
.i18 { width: 18px; height: 18px; stroke-width: 1.6; }

.app {
    display: grid;
    grid-template-columns: minmax(0, 597fr) minmax(0, 326fr) minmax(0, 353fr);
    grid-template-rows: 30px minmax(0, 431fr) minmax(0, 239fr);
    gap: 6px;
    height: 100vh;
    padding: 0 6px;
    background: #000;
    border-radius: 9px 9px 0 0;
    overflow: hidden;
}
.panel {
    display: flex;
    flex-direction: column;
    background: #181d20;
    border-radius: 4px;
    overflow: hidden;
}

/* title bar */
.titlebar {
    grid-column: 1 / -1;
    display: grid;
    grid-template-columns: 561fr auto 675fr;
    align-items: center;
    padding-top: 4px;
}
.lights {
    display: flex;
    gap: 7px;
    padding: 0 0 14px 1px;
}
.light {
    width: 11px;
    height: 11px;
    border-radius: 50%;
}
.red { background: #fe5f57; }
.yellow { background: #febc2e; }
.green { background: #28c840; }
.doc-title {
    display: flex;
    align-items: center;
    gap: 4px;
}
.title-actions {
    display: flex;
    align-items: center;
    justify-content: flex-end;
    padding-right: 7px;
}
.icon-btn {
    width: 29px;
    height: 22px;
}
.has-dot { position: relative; }
.has-dot::after {
    content: "";
    position: absolute;
    right: 5px;
    top: 1px;
    width: 4px;
    height: 4px;
    border-radius: 50%;
    background: #f4504f;
}
.credit-btn {
    justify-content: flex-start;
    width: 45px;
    height: 22px;
    gap: 7px;
    margin: 0 3px 0 4px;
    padding-left: 2px;
    font-weight: bold;
    background: #111315;
    border-radius: 4px;
}
.account {
    width: 89px;
    height: 22px;
    gap: 4px;
    margin: 0 15px 0 4px;
    background: #222426;
    border-radius: 11px;
}
.avatar {
    width: 15px;
    height: 15px;
    margin-right: 6px;
    border-radius: 50%;
    background: linear-gradient(100deg, #f9b6d4 25%, #d58df2 55%, #5cc8fa);
}
.coin {
    display: flex;
    align-items: center;
    justify-content: center;
    width: 12px;
    height: 12px;
    color: #15200a;
    background: #b8f135;
    border-radius: 50%;
}
.export {
    width: 72px;
    height: 22px;
    gap: 9px;
    font-weight: bold;
    color: #06332a;
    background: linear-gradient(100deg, #05e9dd, #00f5b2 70%);
    border-radius: 4px;
}

/* library */
.tabs {
    display: flex;
    flex: none;
    height: 45px;
    padding: 5px 2px 0;
    color: #dfe2e4;
    background: #0f1316;
    border-bottom: 1px solid #000;
}
.tab {
    flex-direction: column;
    justify-content: flex-start;
    gap: 3px;
    min-width: 51px;
    padding: 0 3px;
}
.tab.active, .ptab.active, .side-sub.active {
    color: #1fdcae;
}
.library-body {
    display: flex;
    flex: 1;
    min-height: 0;
}
.sidebar {
    display: flex;
    flex-direction: column;
    gap: 4px;
    width: 146px;
    flex: none;
    padding: 9px 14px 0 7px;
    font-weight: bold;
    color: #9a9fa3;
    border-right: 1px solid #111518;
}
.side-item {
    display: flex;
    align-items: center;
    height: 29px;
    padding: 0 7px;
    background: #1f2427;
    border-radius: 4px;
}
.side-item.open { color: #c5c9cc; }
.side-item.open svg { margin-left: 6px; }
.side-item.plain { padding-left: 20px; }
.caret {
    width: 5px;
    height: 4px;
    background: #9a9fa3;
    clip-path: polygon(0 0, 100% 0, 50% 100%);
}
.side-item .caret { margin-right: 8px; }
.side-item .caret.right {
    width: 4px;
    height: 5px;
    margin-right: 9px;
    clip-path: polygon(0 0, 100% 50%, 0 100%);
}
.side-sub {
    height: 28px;
    padding: 7px 0 7px 20px;
}
.highlight {
    border: 5px solid #4cebbd;
    border-radius: 2px;
}
.side-sub.highlight {
    width: 90px;
    height: 30px;
    margin: -1px 0 -1px 5px;
    padding: 3px 10px;
}
.ai-badge {
    width: 18px;
    height: 12px;
    margin-left: auto;
    font-size: 9px;
    line-height: 12px;
    font-style: italic;
    text-align: center;
    color: #12230f;
    background: linear-gradient(100deg, #c8f24a, #6df07c);
    border-radius: 2px;
}

/* music generator */
.generator {
    display: flex;
    flex-direction: column;
    flex: 1;
    min-width: 0;
    padding: 0 9px 11px 10px;
}
.model-row {
    display: flex;
    align-items: center;
    height: 36px;
    flex: none;
    margin-right: 6px;
    border-bottom: 1px solid #262b2f;
}
.model {
    width: 165px;
    height: 36px;
    gap: 5px;
    background: #24292d;
}
.pause {
    width: 6px;
    height: 10px;
    margin-right: 3px;
    border: solid #d8dbdd;
    border-width: 0 2px;
}
.pro-badge {
    width: 51px;
    height: 13px;
    font-size: 8px;
    line-height: 13px;
    font-weight: bold;
    font-style: italic;
    color: #12302a;
    background: linear-gradient(100deg, #a8ef4e, #1ce0b6);
    border-radius: 3px;
}
.history {
    position: relative;
    flex: 1;
    padding-left: 2px;
}
.notice {
    font-size: 9px;
    line-height: 13px;
    color: #4f5559;
}
.date { padding: 15px 4px 0; }
.query {
    padding: 6px 4px 7px;
    font-weight: bold;
}
.results {
    display: flex;
    flex-wrap: wrap;
    gap: 7px;
}
.result {
    justify-content: flex-start;
    width: 143px;
    height: 33px;
    gap: 10px;
    padding: 0 0 2px 9px;
    background: #1f2427;
    border: 1px solid #2a2f33;
    border-radius: 5px;
}
.history-scroll {
    position: absolute;
    right: 9px;
    bottom: 4px;
    width: 4px;
    height: 33px;
    background: #31383d;
}
.prompt {
    flex: none;
    margin-left: 5px;
    height: 180px;
    padding: 6px 14px 11px 7px;
    display: flex;
    flex-direction: column;
    background: #1f2427;
    box-shadow: -3px -4px 0 #1f2427;
}
.prompt-head {
    display: flex;
    justify-content: space-between;
    margin-bottom: 11px;
    padding-right: 2px;
}
.optimize { font-size: 12px; }
.optimize svg, .pen-ai { color: #1fdcae; }
.pen-ai {
    align-self: flex-end;
    margin: 0 3px 0 -4px;
    font-size: 7px;
    line-height: 9px;
    font-weight: bold;
}
.prompt-box {
    display: flex;
    flex-direction: column;
    justify-content: space-between;
    flex: 1;
    padding: 5px 9px 7px;
    background: #14181b;
    border-radius: 3px;
}
.prompt-line, .prompt-tools {
    display: flex;
    align-items: center;
    gap: 6px;
}
.prompt-line input {
    width: 208px;
    outline: none;
}
.tag {
    padding: 0 8px;
    font-size: 9px;
    line-height: 15px;
    font-weight: bold;
    color: #f1f2f3;
    background: #1b1f22;
    border: 1px solid #2d3236;
    border-radius: 6px;
}
.chip {
    padding: 0 10px;
    font-size: 9px;
    line-height: 16px;
    font-weight: bold;
    color: #1cc9a0;
    border: 1px solid #1cc9a0;
    border-radius: 4px;
}
.prompt-tools { padding: 0 4px 0 1px; }
.count {
    margin-left: auto;
    padding-right: 3px;
    color: #92979b;
}
.prompt-foot {
    display: flex;
    align-items: center;
    margin-top: 15px;
    padding-right: 2px;
}

/* drop-downs: the select and its arrow share one grid cell */
.select {
    display: grid;
    align-items: center;
    height: 21px;
    background: #24292d;
    border-radius: 4px;
}
.select > * { grid-area: 1 / 1; }
.select select {
    appearance: none;
    width: 100%;
    height: 21px;
    padding: 0 7px;
    outline: none;
}
.select .arrow {
    justify-self: end;
    margin-right: 6px;
    pointer-events: none;
}
.select.dark { background: #101417; }
.length {
    width: 82px;
    height: 22px;
    background: #292e33;
}
.length .lead { margin-left: 8px; }
.length select { padding-left: 25px; }
.length .arrow { margin-right: 8px; }
.balance {
    width: 67px;
    height: 22px;
    gap: 4px;
    margin: 0 7px 0 auto;
    color: #dfe2e4;
    background: #292e32;
    border-radius: 11px;
}
.generate {
    width: 113px;
    height: 22px;
    gap: 5px;
    font-weight: bold;
    color: #12312b;
    background: #a5fae5;
    border-radius: 4px;
}

/* preview */
.preview-head, .inspector-head {
    display: flex;
    align-items: center;
    height: 45px;
    flex: none;
    padding: 0 12px 0 10px;
    background: #0f1316;
    border-bottom: 1px solid #000;
}
.ptab {
    margin-right: 10px;
    font-weight: bold;
    color: #dcdfe1;
}
.preview-head .ptab { padding-top: 5px; }
.quality {
    width: 87px;
    margin: 0 14px 0 auto;
    background: #1d2225;
}
.wide-icon {
    width: 20px;
    height: 14px;
}
.preview-head .icon-plain + .icon-plain { margin-left: 16px; }
.ruler-x {
    width: 100%;
    height: 14px;
}
.ruler-y {
    width: 14px;
    height: 304px;
}
.ruler-x, .ruler-y {
    stroke: #444b50;
    stroke-width: 1;
    background: #1b2023;
}
.ruler-x text, .ruler-y text {
    font-size: 8px;
    fill: #8d9296;
    stroke: none;
}
.stage {
    display: flex;
    flex: 1;
    min-height: 0;
}
.stage-area {
    display: flex;
    justify-content: center;
    flex: 1;
    padding-top: 1px;
}
.canvas {
    height: 100%;
    aspect-ratio: 9 / 16;
    background: #000;
}
.transport {
    display: flex;
    flex-direction: column;
    gap: 12px;
    flex: none;
    padding: 8px 10px 7px 12px;
}
.time-row, .play-row {
    display: flex;
    align-items: center;
}
.time-row { justify-content: space-between; }
.time-now {
    padding: 3px 10px;
    margin-left: 14px;
    background: #101417;
    border-radius: 4px;
}
.play-row { gap: 14px; }
.ratio {
    width: 58px;
    background: #101417;
}
.brace {
    width: 18px;
    font-size: 14px;
}

/* sliders */
input[type="range"] {
    appearance: none;
    width: 96px;
    height: 12px;
    background: linear-gradient(#52585c, #52585c) center / 100% 2px no-repeat;
    outline: none;
}
input[type="range"]::-webkit-slider-thumb {
    appearance: none;
    width: 11px;
    height: 11px;
    background: #181d20;
    border: 2px solid #a9aeb1;
    border-radius: 50%;
}
input[type="range"]:disabled::-webkit-slider-thumb {
    background: #4a5156;
    border-color: #4a5156;
}
input[type="range"].seek {
    width: 104px;
    background: linear-gradient(90deg, #1be0c4, #2be3b3 70%, #42484c 70%) center / 100% 4px no-repeat;
}
input[type="range"].zoom {
    width: 87px;
    background: linear-gradient(90deg, #c3c6c8 40%, #52585c 40%) center / 100% 2px no-repeat;
}
input[type="range"].fade-handle {
    width: 62px;
    margin: 0 8px 0 auto;
    background: linear-gradient(90deg, transparent 10%, #030b09 10%) center / 100% 2px no-repeat;
}

/* inspector */
.inspector {
    grid-column: 3;
    grid-row: 2 / 4;
    border-radius: 4px 4px 0 0;
}
.inspector-head .ptab {
    margin: 2px 22px 0 1px;
}
.subtabs {
    display: flex;
    align-items: center;
    height: 35px;
    flex: none;
    padding: 1px 11px 0;
    border-bottom: 1px solid #202528;
}
.subtab {
    height: 22px;
    margin-right: 6px;
    padding: 0 12px;
}
.subtab.active {
    font-weight: bold;
    color: #eef0f1;
    background: #2a2e36;
    border-radius: 4px;
}
.inspector-body {
    position: relative;
    flex: 1;
    min-height: 0;
    overflow: hidden;
    padding: 15px 11px 0;
}
.clip-card {
    display: grid;
    height: 70px;
    margin: 0 3px 19px 4px;
    background: #05332b;
    border-radius: 3px;
    overflow: hidden;
}
.clip-card > * { grid-area: 1 / 1; }
.card-wave {
    width: 100%;
    height: 70px;
    fill: #039c83;
    stroke: none;
}
.card-head {
    stroke: #b8766c;
    stroke-width: 4;
}
.card-top {
    display: flex;
    align-items: center;
    align-self: start;
    gap: 5px;
    padding: 8px 0 0 8px;
    color: #e8f1ef;
}
.prop {
    display: grid;
    grid-template-columns: 97px 98px 1fr 73px;
    align-items: center;
    height: 36px;
}
.prop label {
    display: flex;
    align-items: center;
    gap: 3px;
    white-space: nowrap;
}
.prop.prop-title { grid-template-columns: 1fr 73px; }
.prop h2 {
    display: flex;
    align-items: center;
    gap: 12px;
    color: #f1f3f4;
}
.prop > input { margin-left: 2px; }
.value { text-align: right; }
.value small {
    display: inline-block;
    min-width: 13px;
    font-size: 9px;
    color: #565c60;
    text-align: center;
}
.key {
    justify-self: end;
    margin-right: 13px;
}
.wide, .eq { grid-column: 2 / -1; }
.eq {
    display: flex;
    gap: 7px;
}
.eq .select { width: 107px; }
.setting {
    height: 21px;
    padding: 0 8px;
    font-weight: bold;
    background: #22272b;
    border-radius: 4px;
}
.lr {
    display: flex;
    align-items: center;
    justify-content: space-between;
    color: #92979b;
}
.lr input[type="range"] { width: 72px; }
.enhancer {
    margin-top: 10px;
    border-top: 1px solid #1c2124;
}
.toggle-row {
    display: flex;
    align-items: center;
    gap: 7px;
    height: 38px;
}
.toggle-row b { color: #f1f3f4; }
.toggle {
    appearance: none;
    width: 22px;
    height: 10px;
    padding: 1px;
    background: #303539;
    border-radius: 5px;
}
.toggle::before {
    content: "";
    display: block;
    width: 8px;
    height: 8px;
    background: #989da0;
    border-radius: 50%;
}
.modes {
    display: flex;
    margin: 9px 0 3px;
    padding: 4px;
    background: #101417;
    border-radius: 5px;
}
.mode {
    flex: 1;
    height: 21px;
    font-size: 12px;
    color: #51575b;
    border-radius: 4px;
}
.mode.active { background: #1a1f23; }
.off { color: #51575b; }
.inspector-scroll {
    position: absolute;
    right: 0;
    top: 104px;
    width: 3px;
    height: 287px;
    background: #454c51;
    border-radius: 2px;
}
.inspector-foot {
    display: flex;
    justify-content: flex-end;
    flex: none;
    height: 33px;
    padding: 12px 14px 0 0;
    background: #1f2427;
}
.reset {
    width: 44px;
    height: 22px;
    font-weight: bold;
    background: #45515a;
    border-radius: 4px;
}

/* timeline */
.timeline {
    grid-column: 1 / 3;
    grid-row: 3;
    border-radius: 4px 4px 0 0;
}
.toolbar {
    display: flex;
    align-items: center;
    flex: none;
    height: 36px;
    padding-left: 3px;
    background: #15191c;
    border-bottom: 1px solid #000;
}
.tool {
    width: 29px;
    height: 22px;
}
.select-tool { width: 32px; }
.sep {
    width: 1px;
    height: 14px;
    margin: 0 7px;
    background: #3a3f43;
}
.robot {
    position: relative;
    margin-left: 26px;
}
.face {
    width: 17px;
    height: 17px;
    padding: 5px 3px;
    background: #20e2b4;
    border-radius: 50%;
}
.face::before {
    content: "";
    display: block;
    height: 7px;
    background: radial-gradient(circle, #bff 1px, transparent 2px) 0 0 / 6px 7px #06241e;
    border-radius: 4px;
}
.free {
    position: absolute;
    left: 17px;
    top: -4px;
    padding: 0 1px;
    font-size: 6px;
    line-height: 9px;
    font-weight: bold;
    font-style: italic;
    color: #fff;
    background: linear-gradient(90deg, #4a80f5, #d250f0);
    border-radius: 2px;
}
.meter {
    width: 13px;
    height: 21px;
    margin: 0 12px 0 22px;
    background: linear-gradient(90deg, transparent 6px, #15191c 6px, #15191c 7px, transparent 7px), repeating-linear-gradient(#44494d 0 3px, transparent 3px 5px);
}
.timeline-body {
    position: relative;
    flex: 1;
    min-height: 0;
    overflow: hidden;
}
.ruler-row {
    display: flex;
    height: 26px;
    margin-bottom: 46px;
}
.track-tools {
    display: flex;
    gap: 8px;
    width: 112px;
    flex: none;
    padding: 3px 0 0 9px;
}
.snap {
    width: 18px;
    height: 14px;
}
.track-tools .icon-plain { width: 16px; }
.ruler {
    display: grid;
    grid-template-columns: 2fr repeat(6, 5fr) 4fr;
    flex: 1;
    margin-right: -8px;
}
.mark {
    padding-top: 2px;
    font-size: 9px;
    font-weight: bold;
    color: #93989c;
    background:
        linear-gradient(#8f9498, #8f9498) left bottom / 1px 8px no-repeat,
        linear-gradient(90deg, #6a7074 1px, transparent 1px) left bottom / 20% 5px repeat-x;
}
.mark.lead {
    background: linear-gradient(90deg, #6a7074 1px, transparent 1px) left bottom / 50% 5px repeat-x;
}
.mark.last {
    background:
        linear-gradient(#8f9498, #8f9498) left bottom / 1px 8px no-repeat,
        linear-gradient(90deg, #6a7074 1px, transparent 1px) left bottom / 25% 5px repeat-x;
}
.tracks { margin-right: 15px; }
.track {
    display: grid;
    grid-template-columns: 103px 1fr;
    background: #1f2427;
}
.track.video { height: 64px; }
.track.audio { height: 40px; }
.track-head {
    padding-left: 10px;
    font-size: 9px;
    color: #8e9397;
    border-right: 1px solid #181d20;
}
.video .track-head { padding-top: 15px; }
.audio .track-head { padding-top: 3px; }
.track-icons {
    display: flex;
    gap: 10px;
    margin: 6px 0 0 -2px;
    color: #c9cdd0;
}
.lane {
    padding: 0 16px 0 29px;
    background: linear-gradient(90deg, #1b2023 28px, transparent 28px);
}
.audio .lane {
    padding-top: 1px;
    border-top: 1px solid #24262b;
}
.clip {
    display: grid;
    height: 38px;
    background: #05332b;
    border: 2px solid #eef5f3;
    border-radius: 4px;
    overflow: hidden;
}
.clip > * { grid-area: 1 / 1; }
.wave {
    width: 100%;
    height: 34px;
    fill: #05b492;
    stroke: none;
    background: linear-gradient(#6fbfa6, #6fbfa6) 0 10px / 100% 1px no-repeat;
}
.wave-peaks { fill: #6fd2b6; }
.clip-name {
    display: flex;
    gap: 3px;
    padding-left: 3px;
    align-self: start;
    font-size: 9px;
    line-height: 14px;
    color: #e9f3f0;
}
.markers {
    display: flex;
    justify-content: space-between;
    align-self: start;
    padding: 0 21px 0 23px;
}
.marker {
    width: 10px;
    height: 11px;
}
.v-scroll {
    position: absolute;
    right: 3px;
    top: 30px;
    width: 10px;
    height: 157px;
    background:
        radial-gradient(circle at 5px 5px, #56626a 4px, transparent 5px),
        radial-gradient(circle at 5px 152px, #56626a 4px, transparent 5px),
        #2c353b;
    border-radius: 5px;
}
.playhead {
    position: absolute;
    left: 59.4%;
    top: 0;
    display: flex;
    flex-direction: column;
    align-items: center;
    width: 20px;
    height: 201px;
    margin-left: -10px;
    background: linear-gradient(#f4535c, #f4535c) center / 2px 100% no-repeat;
}
.playhead-grip {
    width: 11px;
    height: 11px;
    background: #fb545c;
    border-radius: 2px;
    clip-path: polygon(0 0, 100% 0, 100% 55%, 50% 100%, 0 55%);
}
.cut-here {
    width: 20px;
    height: 32px;
    margin-top: 44px;
    color: #fff;
    background: #fb4f58;
    border-radius: 10px;
}
.h-scroll {
    position: absolute;
    left: 33%;
    bottom: 0;
    width: 33%;
    height: 2px;
    background: #3a4146;
}
```
FILE: script.js
```js
// waveform of the timeline clip, one bar per pixel
let seed = 7;
function rand() {
    seed = (seed * 16807) % 2147483647;
    return seed / 2147483647;
}

let wave = '';
let peaks = '';
let level = 20;
let hold = 0;
for (let x = 2; x < 748; x++) {
    if (hold-- <= 0) {
        if (rand() < 0.4) {
            level = 7 + rand() * 11;
            hold = 0;
        } else {
            level = 17 + rand() * 6;
            hold = Math.floor(rand() * 3);
        }
    }
    let h = level + rand() * 2;
    if (x > 695 && x < 705) {
        h = Math.abs(x - 700) * 1.5;
    } else if (x >= 705) {
        h = 18 * Math.pow((748 - x) / 43, 1.2) + rand() * 2;
    }
    wave += `M${x} 34v${-h.toFixed(1)}h1v${h.toFixed(1)}z`;
    if (x < 695 && rand() < 0.06) {
        const p = 3 + rand() * 4;
        peaks += `M${x} 12v${-p.toFixed(1)}h1v${p.toFixed(1)}z`;
    }
}
document.getElementById('wave').setAttribute('d', wave);
document.getElementById('peaks').setAttribute('d', peaks);

document.getElementById('markers').innerHTML =
    '<svg class="marker"><use href="#marker"/></svg>'.repeat(21);
```
